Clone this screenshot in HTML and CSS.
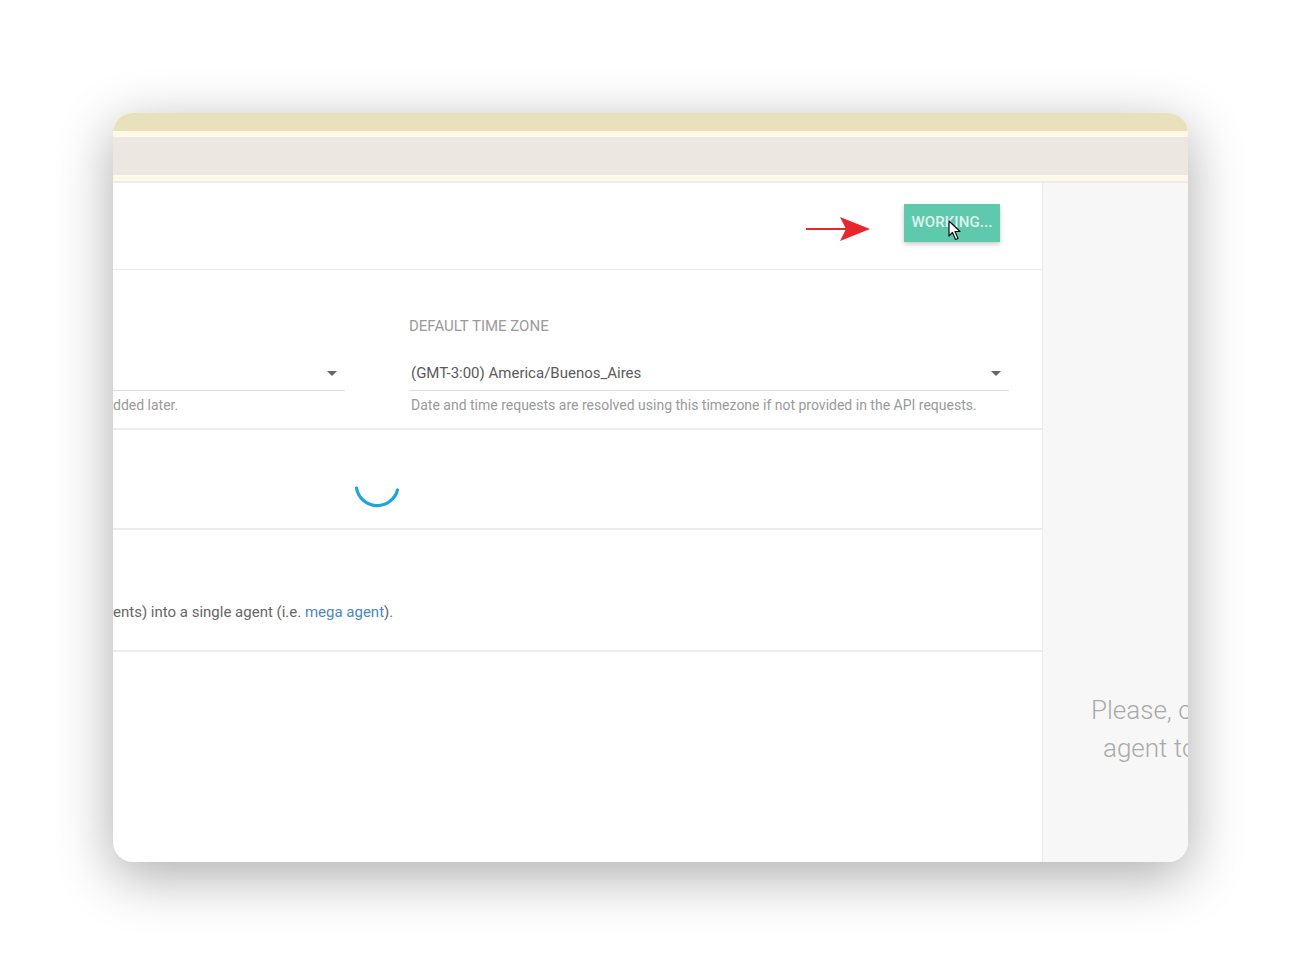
FILE: index.html
```html
<!DOCTYPE html>
<html lang="en">
<head>
  <meta charset="UTF-8">
  <title>Agent settings</title>
  <link rel="stylesheet" href="styles.css">
</head>
<body>

<div class="window">
  <!-- ========= BROWSER CHROME ========= -->
  <div class="chrome">
    <div class="chrome-top"></div>
    <div class="chrome-line"></div>
    <div class="chrome-bar"></div>
    <div class="chrome-line"></div>
    <div class="chrome-edge"></div>
  </div>

  <div class="app">
    <main class="settings">
      <div class="toolbar">
        <svg class="pointer-arrow" width="66" height="26" viewBox="0 0 66 26">
          <line x1="0" y1="13" x2="44" y2="13" stroke="#e8262b" stroke-width="2"/>
          <polygon points="34,1 64,13 34,25 40,13" fill="#e8262b"/>
        </svg>
        <button class="btn-save">WORKING...</button>
        <svg class="cursor" width="14" height="21" viewBox="0 0 14 21">
          <path d="M1 1 L1 16 L4.5 12.5 L7.5 19.5 L10 18.5 L7 11.5 L12 11.5 Z" fill="#fff" stroke="#111" stroke-width="1.2" stroke-linejoin="round"/>
        </svg>
      </div>

      <section class="row fields">
        <div class="field field-lang">
          <div class="field-label">&nbsp;</div>
          <div class="select"><span></span><i class="caret"></i></div>
          <div class="field-hint">dded later.</div>
        </div>
        <div class="field field-tz">
          <div class="field-label">DEFAULT TIME ZONE</div>
          <div class="select"><span>(GMT-3:00) America/Buenos_Aires</span><i class="caret"></i></div>
          <div class="field-hint">Date and time requests are resolved using this timezone if not provided in the API requests.</div>
        </div>
      </section>

      <section class="row loading">
        <svg class="spinner" width="50" height="50" viewBox="0 0 50 50">
          <path d="M4.5 24 A21 21 0 0 0 45.5 26" fill="none" stroke="#1ea5dc" stroke-width="3.2" stroke-linecap="round"/>
        </svg>
      </section>

      <section class="row mega">
        <p>ents) into a single agent (i.e. <a href="#">mega agent</a>).</p>
      </section>
    </main>

    <aside class="sidebar">
      <p class="empty">
        <span class="empty-l1">Please, create an</span>
        <span class="empty-l2">agent to start.</span>
      </p>
    </aside>
  </div>
</div>

</body>
</html>
```

FILE: styles.css
```css
/* ---------- Page ---------- */
html, body { margin: 0; padding: 0; background: #ffffff; }
body { padding: 113px 113px 114px; font-family: Roboto, "Noto Sans", Arial, sans-serif; color: #555; }

.window {
  width: 1075px;
  height: 749px;
  border-radius: 20px;
  overflow: hidden;
  background: #fff;
  box-shadow: 0 14px 55px rgba(0, 0, 0, 0.33);
  display: flex;
  flex-direction: column;
}

/* Browser chrome stripes */
.chrome-top { height: 18px; background: #e9e1bc; }
.chrome-line { height: 6px; background: #fdf8e8; }
.chrome-bar { height: 38px; background: #ece7e0; }
.chrome-edge { height: 2px; background: #f1ece1; }

.app { flex: 1; display: flex; min-height: 0; }

/* ---------- Main settings column ---------- */
.settings { width: 929px; flex-shrink: 0; overflow: hidden; }

.toolbar {
  height: 87px;
  border-bottom: 1px solid #ececec;
  display: flex;
  align-items: flex-start;
  justify-content: flex-end;
  padding: 21px 42px 0 0;
  box-sizing: border-box;
  position: relative;
}
.pointer-arrow { margin: 12px 32px 0 0; }
.btn-save {
  width: 96px;
  height: 38px;
  border: 0;
  background: #5fc9ae;
  color: rgba(255, 255, 255, 0.8);
  font: 500 15px Roboto, Arial, sans-serif;
  letter-spacing: 0.1px;
  box-shadow: 0 2px 5px rgba(0, 0, 0, 0.22);
  padding: 0 0 2px;
}
.cursor { position: absolute; left: 835px; top: 37px; }

.row { border-bottom: 2px solid #ececec; box-sizing: border-box; }

/* Fields */
.fields { height: 160px; display: flex; gap: 64px; padding-top: 47px; }
.field-lang { width: 232px; }
.field-tz { width: 600px; }
.field-label { font-size: 15px; color: #9a9a9a; height: 18px; line-height: 18px; margin-bottom: 21px; }
.select {
  height: 34px;
  border-bottom: 1px solid #ddd;
  display: flex;
  align-items: center;
  justify-content: space-between;
  padding: 0 8px 0 2px;
  font-size: 15px;
  color: #5a5a5a;
}
.caret { width: 0; height: 0; border-left: 5px solid transparent; border-right: 5px solid transparent; border-top: 5px solid #666; }
.field-hint { margin-top: 6px; padding-left: 2px; font-size: 14px; color: #9a9a9a; line-height: 16px; }
.field-lang .field-hint { padding-left: 0; }

/* Spinner row */
.loading { height: 100px; padding: 34px 0 0 239px; }
.spinner { display: block; }

/* Mega agent row */
.mega { height: 122px; padding-top: 72px; }
.mega p { margin: 0; font-size: 15px; color: #666; line-height: 20px; }
.mega a { color: #4a87c4; text-decoration: none; }

/* ---------- Sidebar ---------- */
.sidebar {
  flex: 1;
  background: #f7f7f7;
  border-left: 1px solid #ebebeb;
  overflow: hidden;
  padding-top: 508px;
  box-sizing: border-box;
}
.empty { margin: 0; width: 400px; font-size: 26px; font-weight: 300; color: #aaa; line-height: 38px; white-space: nowrap; }
.empty span { display: block; }
.empty-l1 { padding-left: 48px; }
.empty-l2 { padding-left: 60px; }
```
